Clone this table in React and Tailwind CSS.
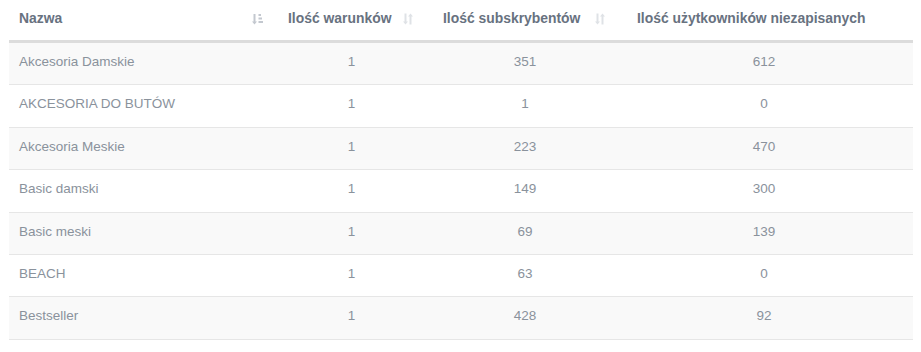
const rows = [
  { name: 'Akcesoria Damskie', cond: 1, subs: 351, unsaved: 612 },
  { name: 'AKCESORIA DO BUTÓW', cond: 1, subs: 1, unsaved: 0 },
  { name: 'Akcesoria Meskie', cond: 1, subs: 223, unsaved: 470 },
  { name: 'Basic damski', cond: 1, subs: 149, unsaved: 300 },
  { name: 'Basic meski', cond: 1, subs: 69, unsaved: 139 },
  { name: 'BEACH', cond: 1, subs: 63, unsaved: 0 },
  { name: 'Bestseller', cond: 1, subs: 428, unsaved: 92 },
];

// sorted ascending (arrow down + bars)
const SortActive = () => (
  <svg width="11" height="12" viewBox="0 0 11 12" className="text-[#c3c8cf]">
    <path d="M2.5 1v8.5" stroke="currentColor" strokeWidth="2" />
    <path d="M0 8.5l2.5 3 2.5-3z" fill="currentColor" />
    <rect x="6.5" y="1" width="2.5" height="2" fill="currentColor" />
    <rect x="6.5" y="4.5" width="3.5" height="2" fill="currentColor" />
    <rect x="6.5" y="8" width="4.5" height="2" fill="currentColor" />
  </svg>
);

// both directions, idle
const SortIdle = () => (
  <svg width="10" height="12" viewBox="0 0 10 12" className="text-[#dfe2e6]">
    <path d="M2.5 0.5v9" stroke="currentColor" strokeWidth="2" />
    <path d="M0 8.5l2.5 3 2.5-3z" fill="currentColor" />
    <path d="M7.5 2.5v9" stroke="currentColor" strokeWidth="2" />
    <path d="M5 3.5l2.5-3 2.5 3z" fill="currentColor" />
  </svg>
);

const cols = 'grid grid-cols-[269px_155px_194px_286px]';

export default function App() {
  return (
    <div className="w-[921px] h-[352px] bg-white font-['Liberation_Sans',Arial,sans-serif] text-[13.5px]">
      <div className="ml-[9px] w-[904px]">
        {/* header */}
        <div className={`${cols} h-[43px] border-b-[3px] border-[#dcdcdc] pb-[3px] text-[13.9px] font-bold text-[#68727f]`}>
          <div className="flex items-center justify-between pl-[10px] pr-[15px]">
            <span>Nazwa</span>
            <SortActive />
          </div>
          <div className="flex items-center justify-between pl-[10px] pr-[20px]">
            <span>Ilość warunków</span>
            <SortIdle />
          </div>
          <div className="flex items-center justify-between pl-[10px] pr-[22px]">
            <span>Ilość subskrybentów</span>
            <SortIdle />
          </div>
          <div className="flex items-center pl-[10px]">
            <span>Ilość użytkowników niezapisanych</span>
          </div>
        </div>

        {/* body */}
        {rows.map((r, i) => (
          <div
            key={r.name}
            className={`${cols} h-[42.4px] items-center border-b border-[#e6e6e6] pb-[3px] text-[#8a929c] ${
              i % 2 === 0 ? 'bg-[#f9f9f9]' : 'bg-white'
            }`}
          >
            <div className="pl-[10px]">{r.name}</div>
            <div className="text-center pr-[8px]">{r.cond}</div>
            <div className="text-center pr-[10px]">{r.subs}</div>
            <div className="text-center pr-[12px]">{r.unsaved}</div>
          </div>
        ))}
      </div>
    </div>
  );
}
